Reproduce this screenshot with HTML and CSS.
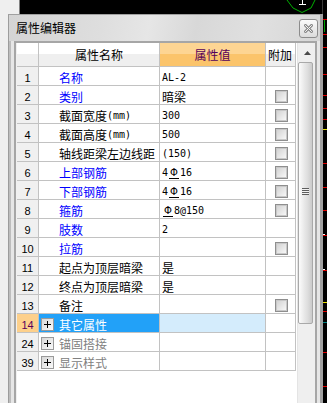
FILE: index.html
```html
<!DOCTYPE html>
<html lang="zh-CN">
<head>
<meta charset="utf-8">
<title>属性编辑器</title>
<link rel="stylesheet" href="styles.css">
</head>
<body>
<div class="screen">
  <div class="backwin"></div>
  <svg class="cad-top" width="327" height="14" viewBox="0 0 327 14">
    <polyline points="287,0 293,8 302,12.5 311,8 315,0" fill="none" stroke="#00b000" stroke-width="1"/>
    <path d="M302.5 0V4M299 4.5H306" stroke="#ffffff" stroke-width="1"/>
  </svg>
  <svg class="cad-right" width="5" height="403" viewBox="0 0 5 403">
    <rect x="0" y="0" width="1" height="403" fill="#3a3a3a"/>
    <path d="M1 19.5H5M1 34.5H5M1 47.5H5M1 74.5H5M1 95.5H5M1 108.5H5M1 119.5H5M1 163.5H5M1 187.5H5M1 210.5H5M1 235.5H5M1 270.5H5M1 311.5H5M1 352.5H5M1 386.5H5" stroke="#e00000" stroke-width="1"/>
    <path d="M1 129.5H5M1 302.5H5" stroke="#e8e000" stroke-width="1"/>
    <path d="M1 322.5H5" stroke="#008080" stroke-width="1"/>
    <path d="M1 234.5H3M1 269.5H3" stroke="#ffffff" stroke-width="1"/>
    <path d="M2.5 20V32" stroke="#00a000" stroke-width="1"/>
  </svg>

  <div class="panel">
    <div class="titlebar">
      <span class="title">属性编辑器</span>
      <span class="close">
        <svg width="9" height="9" viewBox="0 0 9 9">
          <path d="M1.5 1.5L7.5 7.5M7.5 1.5L1.5 7.5" stroke="#8a8a8a" stroke-width="3" stroke-linecap="square"/>
          <path d="M1.5 1.5L7.5 7.5M7.5 1.5L1.5 7.5" stroke="#f4f4f4" stroke-width="1" stroke-linecap="square"/>
        </svg>
      </span>
    </div>
    <div class="panel-body">
      <div class="frame">
        <div class="grid">
          <div class="row head">
            <div class="hnum"></div>
            <div class="hname">属性名称</div>
            <div class="hval">属性值</div>
            <div class="hext">附加</div>
          </div>

          <div class="row"><div class="num">1</div><div class="name blue">名称</div><div class="val"><span class="en">AL-2</span></div><div class="ext"></div></div>
          <div class="row"><div class="num">2</div><div class="name blue">类别</div><div class="val">暗梁</div><div class="ext"><span class="cb"></span></div></div>
          <div class="row"><div class="num">3</div><div class="name">截面宽度<span class="en">(mm)</span></div><div class="val"><span class="en">300</span></div><div class="ext"><span class="cb"></span></div></div>
          <div class="row"><div class="num">4</div><div class="name">截面高度<span class="en">(mm)</span></div><div class="val"><span class="en">500</span></div><div class="ext"><span class="cb"></span></div></div>
          <div class="row"><div class="num">5</div><div class="name">轴线距梁左边线距</div><div class="val"><span class="en">(150)</span></div><div class="ext"><span class="cb"></span></div></div>
          <div class="row"><div class="num">6</div><div class="name blue">上部钢筋</div><div class="val"><span class="en">4</span><span class="rebar">Φ</span><span class="en">16</span></div><div class="ext"><span class="cb"></span></div></div>
          <div class="row"><div class="num">7</div><div class="name blue">下部钢筋</div><div class="val"><span class="en">4</span><span class="rebar">Φ</span><span class="en">16</span></div><div class="ext"><span class="cb"></span></div></div>
          <div class="row"><div class="num">8</div><div class="name blue">箍筋</div><div class="val"><span class="rebar">Φ</span><span class="en">8@150</span></div><div class="ext"><span class="cb"></span></div></div>
          <div class="row"><div class="num">9</div><div class="name blue">肢数</div><div class="val"><span class="en">2</span></div><div class="ext"></div></div>
          <div class="row"><div class="num">10</div><div class="name blue">拉筋</div><div class="val"></div><div class="ext"><span class="cb"></span></div></div>
          <div class="row"><div class="num">11</div><div class="name">起点为顶层暗梁</div><div class="val">是</div><div class="ext"></div></div>
          <div class="row"><div class="num">12</div><div class="name">终点为顶层暗梁</div><div class="val">是</div><div class="ext"></div></div>
          <div class="row"><div class="num">13</div><div class="name">备注</div><div class="val"></div><div class="ext"><span class="cb"></span></div></div>

          <div class="row sel"><div class="num">14</div><div class="name grp"><span class="plus"><svg width="11" height="11" viewBox="0 0 11 11"><path d="M2 5.5H9M5.5 2V9" stroke="#000" stroke-width="1"/></svg></span>其它属性</div><div class="val"></div><div class="ext"></div></div>
          <div class="row"><div class="num">24</div><div class="name grp gray"><span class="plus"><svg width="11" height="11" viewBox="0 0 11 11"><path d="M2 5.5H9M5.5 2V9" stroke="#000" stroke-width="1"/></svg></span>锚固搭接</div><div class="val"></div><div class="ext"></div></div>
          <div class="row"><div class="num">39</div><div class="name grp gray"><span class="plus"><svg width="11" height="11" viewBox="0 0 11 11"><path d="M2 5.5H9M5.5 2V9" stroke="#000" stroke-width="1"/></svg></span>显示样式</div><div class="val"></div><div class="ext"></div></div>
        </div>
        <div class="scrollbar">
          <div class="sb-up">
            <svg width="7" height="4" viewBox="0 0 7 4"><path d="M0 4L3.5 0L7 4Z" fill="#4a4a4a"/></svg>
          </div>
          <div class="sb-thumb"><span class="grip"></span></div>
        </div>
      </div>
    </div>
  </div>
</div>
</body>
</html>
```

FILE: styles.css
```css
* {
  box-sizing: border-box;
}

html,
body {
  margin: 0;
  padding: 0;
}

body {
  width: 327px;
  height: 403px;
  overflow: hidden;
  background: #000;
  font-family: "Noto Sans CJK SC", "Noto Sans", sans-serif;
  font-size: 12px;
  color: #000;
}

.screen {
  position: relative;
  width: 327px;
  height: 403px;
  overflow: hidden;
  background: #000;
}

/* window behind (desktop) */
.backwin {
  position: absolute;
  left: 0;
  top: 0;
  width: 20px;
  height: 403px;
  background: #efefef;
  border-right: 1px solid #808080;
}

.cad-top {
  position: absolute;
  left: 0;
  top: 0;
}

.cad-right {
  position: absolute;
  left: 322px;
  top: 0;
}

/* the property editor window */
.panel {
  position: absolute;
  left: 8px;
  top: 14px;
  width: 315px;
  height: 400px;
  display: flex;
  flex-direction: column;
  background: #e6e6e6;
  border-top: 1px solid #a0a0a0;
  border-left: 1px solid #9c9c9c;
  border-right: 3px solid #a2a2a2;
}

.titlebar {
  height: 26px;
  flex: none;
  display: flex;
  justify-content: space-between;
  align-items: center;
  padding: 0 2px 0 7px;
  background: linear-gradient(100deg, #d4d4d4 0%, #dedede 30%, #e6e6e6 45%, #d8d8d8 60%, #e0e0e0 80%, #d6d6d6 100%);
}

.title {
  align-self: flex-start;
  line-height: 25px;
  font-size: 12px;
  color: #000;
}

.close {
  width: 19px;
  height: 19px;
  display: flex;
  align-items: center;
  justify-content: center;
  border: 1px solid #8c8c8c;
  border-radius: 3px;
  background: linear-gradient(#fbfbfb, #dcdcdc);
}

.panel-body {
  flex: 1;
  display: flex;
  border-left: 2px solid #bdbdbd;
  padding: 0 3px 0 3px;
}

.frame {
  width: 303px;
  display: flex;
  background: #f0f0f0;
  border: 2px solid #a6a6a6;
  border-bottom: none;
  padding-left: 1px;
}

.grid {
  width: 280px;
  background: #fff;
}

.row {
  display: grid;
  grid-template-columns: 22px 121px 106px 30px;
  height: 19px;
}

.row > div {
  border-right: 1px solid #c2c2c2;
  border-bottom: 1px solid #c2c2c2;
  padding-top: 2px;
  line-height: 17px;
  white-space: nowrap;
  overflow: hidden;
}

.row.head {
  height: 24px;
}

.row.head > div {
  padding-top: 3px;
  text-align: center;
  background: linear-gradient(#ffffff 0 50%, #efefef 50% 100%);
}

.row.head > .hval {
  color: #55005a;
  background: linear-gradient(#fdd593 0 50%, #fbc46b 50% 100%);
}

.row.head > .hext {
  text-align: left;
  padding-left: 2px;
}

.row > .num {
  background: #f0f0f0;
  text-align: center;
  font-family: "Liberation Sans", sans-serif;
  font-size: 11px;
  line-height: 18px;
}

.row > .name {
  padding-left: 20px;
}

.row > .val {
  padding-left: 2px;
}

.blue {
  color: #0000ff;
}

.en {
  font-family: "DejaVu Sans Mono", monospace;
  font-size: 10px;
  line-height: 10px;
  vertical-align: 2px;
}

.rebar {
  display: inline-block;
  width: 10px;
  margin: 0 1px;
  text-align: center;
  font-family: "DejaVu Sans", sans-serif;
  font-size: 10px;
  line-height: 10px;
  border-bottom: 1px solid #000;
  vertical-align: 2px;
}

.cb {
  display: block;
  width: 13px;
  height: 13px;
  margin: 2px 0 0 9px;
  border: 1px solid #8e8e8e;
  box-shadow: inset 0 0 0 1px #c8c8c8;
  background: linear-gradient(135deg, #cfcfcf, #fbfbfb);
}

.row > .grp {
  display: flex;
  align-items: flex-start;
  gap: 5px;
  padding-left: 2px;
}

.gray {
  color: #808080;
}

.plus {
  flex: none;
  width: 13px;
  height: 13px;
  margin-top: 2px;
  display: flex;
  align-items: center;
  justify-content: center;
  border: 1px solid #9a9a9a;
  background: linear-gradient(135deg, #d8d8d8, #fafafa);
}

.row.sel > .num {
  background: #fdd08b;
  color: #5a005a;
}

.row.sel > .name {
  background: #22a1f8;
  color: #ffffff;
}

.row.sel > .val {
  background: #d4ecfc;
}

/* vertical scrollbar */
.scrollbar {
  width: 18px;
  background: #efefef;
  border-left: 1px solid #e4e4e4;
}

.sb-up {
  height: 19px;
  display: flex;
  align-items: center;
  justify-content: center;
  padding-left: 1px;
}

.sb-thumb {
  width: 15px;
  height: 262px;
  margin-left: 0;
  display: flex;
  align-items: center;
  justify-content: center;
  border: 1px solid #a9a9a9;
  border-radius: 2px;
  background: linear-gradient(to right, #fcfcfc 0%, #ebebeb 35%, #dedede 65%, #cbcbcb 100%);
}

.grip {
  display: block;
  width: 7px;
  height: 7px;
  margin-top: -3px;
  background: repeating-linear-gradient(#5e5e5e 0 1px, #f2f2f2 1px 2px);
}
```
